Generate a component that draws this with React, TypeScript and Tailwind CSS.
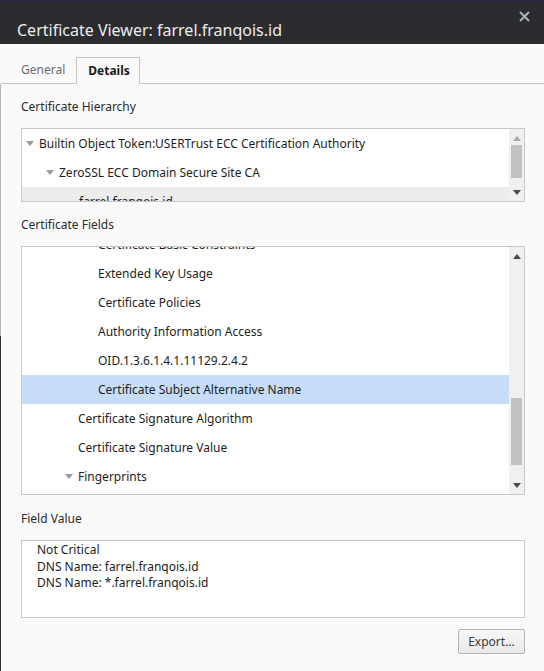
import React from "react";

const font = { fontFamily: '"Noto Sans", "Open Sans", sans-serif' };

function Caret({ className = "" }: { className?: string }) {
  return (
    <svg width="8" height="5" viewBox="0 0 8 5" className={className}>
      <path d="M0 0 L8 0 L4 5 Z" fill="#9a9a9a" />
    </svg>
  );
}

function ArrowUp({ color }: { color: string }) {
  return (
    <svg width="8" height="5" viewBox="0 0 8 5">
      <path d="M0 5 L8 5 L4 0 Z" fill={color} />
    </svg>
  );
}

function ArrowDown({ color }: { color: string }) {
  return (
    <svg width="8" height="5" viewBox="0 0 8 5">
      <path d="M0 0 L8 0 L4 5 Z" fill={color} />
    </svg>
  );
}

type Row = { label: string; indent: number; caret?: boolean; selected?: boolean; muted?: boolean };

function TreeRow({ row }: { row: Row }) {
  return (
    <div
      className={
        "flex h-[29px] shrink-0 items-center text-[12px] text-[#1e1e1e] " +
        (row.selected ? "bg-[#c6dcf7]" : row.muted ? "bg-[#ededed]" : "")
      }
      style={{ paddingLeft: row.indent }}
    >
      {row.caret ? <Caret className="mr-[5px] shrink-0" /> : <span className="w-[13px] shrink-0" />}
      <span className="whitespace-nowrap">{row.label}</span>
    </div>
  );
}

const hierarchy: Row[] = [
  { label: "Builtin Object Token:USERTrust ECC Certification Authority", indent: 4, caret: true },
  { label: "ZeroSSL ECC Domain Secure Site CA", indent: 24, caret: true },
  { label: "farrel.franqois.id", indent: 44, muted: true },
];

const fields: Row[] = [
  { label: "Certificate Basic Constraints", indent: 63 },
  { label: "Extended Key Usage", indent: 63 },
  { label: "Certificate Policies", indent: 63 },
  { label: "Authority Information Access", indent: 63 },
  { label: "OID.1.3.6.1.4.1.11129.2.4.2", indent: 63 },
  { label: "Certificate Subject Alternative Name", indent: 63, selected: true },
  { label: "Certificate Signature Algorithm", indent: 43 },
  { label: "Certificate Signature Value", indent: 43 },
  { label: "Fingerprints", indent: 43, caret: true },
  { label: "SHA-256 Fingerprint", indent: 63 },
];

export default function App() {
  return (
    <div className="flex h-[671px] w-[544px] flex-col overflow-hidden bg-[#fafafa]" style={font}>
      {/* title bar */}
      <div className="flex h-[44px] shrink-0 items-start justify-between border-t border-[#2c2350] bg-[#2b2c30]">
        <div className="pl-[17px] pt-[17px] text-[16px] leading-[24px] text-[#ececec]">
          Certificate Viewer: farrel.franqois.id
        </div>
        <div className="pr-[14px] pt-[10px]">
          <svg width="11" height="11" viewBox="0 0 11 11">
            <path d="M1 1 L10 10 M10 1 L1 10" stroke="#aeb2b8" strokeWidth="2" />
          </svg>
        </div>
      </div>

      <div className="flex flex-1">
        {/* window edge */}
        <div className="flex w-px shrink-0 flex-col">
          <div className="h-[40px] bg-[#fafafa]" />
          <div className="h-[252px] bg-[#b9b9b9]" />
          <div className="flex-1 bg-[#2e2f31]" />
        </div>

        <div className="flex flex-1 flex-col">
          {/* tabs */}
          <div className="flex h-[40px] shrink-0 items-end border-b border-[#c4c4c4]">
            <div className="flex h-[26px] items-center pl-[20px] pr-[11px] text-[12px] text-[#6a6a6a]">General</div>
            <div className="-mb-px flex h-[27px] items-center border border-b-0 border-[#c4c4c4] bg-[#fafafa] pl-[11px] pr-[9px] text-[12px] font-bold text-[#1a1a1a]">
              Details
            </div>
          </div>

          <div className="flex flex-1 flex-col pl-[20px] pr-[19px]">
            <div className="pt-[14px] text-[12px] leading-[18px] text-[#2a2a2a]">Certificate Hierarchy</div>

            <div className="mt-[12px] flex h-[74px] shrink-0 border border-[#c8c8c8] bg-white">
              <div className="flex flex-1 flex-col overflow-hidden">
                {hierarchy.map((r) => (
                  <TreeRow key={r.label} row={r} />
                ))}
              </div>
              <div className="flex w-[15px] shrink-0 flex-col items-center bg-[#f0f0f0]">
                <div className="flex h-[16px] items-center justify-center pt-[2px]">
                  <ArrowUp color="#a8a8a8" />
                </div>
                <div className="h-[33px] w-[11px] bg-[#c2c2c2]" />
                <div className="flex-1" />
                <div className="flex h-[16px] items-center justify-center pb-[2px]">
                  <ArrowDown color="#4a4a4a" />
                </div>
              </div>
            </div>

            <div className="pt-[14px] text-[12px] leading-[18px] text-[#2a2a2a]">Certificate Fields</div>

            <div className="mt-[12px] flex h-[249px] shrink-0 border border-[#c8c8c8] bg-white">
              <div className="flex flex-1 flex-col overflow-hidden">
                <div className="-mt-[17px] flex flex-col">
                  {fields.map((r) => (
                    <TreeRow key={r.label} row={r} />
                  ))}
                </div>
              </div>
              <div className="flex w-[15px] shrink-0 flex-col items-center bg-[#f0f0f0]">
                <div className="flex h-[16px] items-center justify-center pt-[2px]">
                  <ArrowUp color="#4a4a4a" />
                </div>
                <div className="h-[135px]" />
                <div className="h-[67px] w-[11px] bg-[#c2c2c2]" />
                <div className="flex-1" />
                <div className="flex h-[16px] items-center justify-center pb-[2px]">
                  <ArrowDown color="#4a4a4a" />
                </div>
              </div>
            </div>

            <div className="pt-[15px] text-[12px] leading-[18px] text-[#2a2a2a]">Field Value</div>

            <div className="mt-[12px] flex h-[78px] shrink-0 flex-col border border-[#c8c8c8] bg-white pl-[15px] pt-[1px] text-[12px] leading-[16.5px] text-[#1e1e1e]">
              <div>Not Critical</div>
              <div>DNS Name: farrel.franqois.id</div>
              <div>DNS Name: *.farrel.franqois.id</div>
            </div>

            <div className="flex justify-end pt-[11px]">
              <button className="h-[25px] w-[67px] rounded-[2px] border border-[#b4b4b4] bg-gradient-to-b from-[#f7f7f7] to-[#e9e9e9] text-[12px] text-[#3a3a3a]">
                Export...
              </button>
            </div>
          </div>
        </div>
      </div>
    </div>
  );
}
